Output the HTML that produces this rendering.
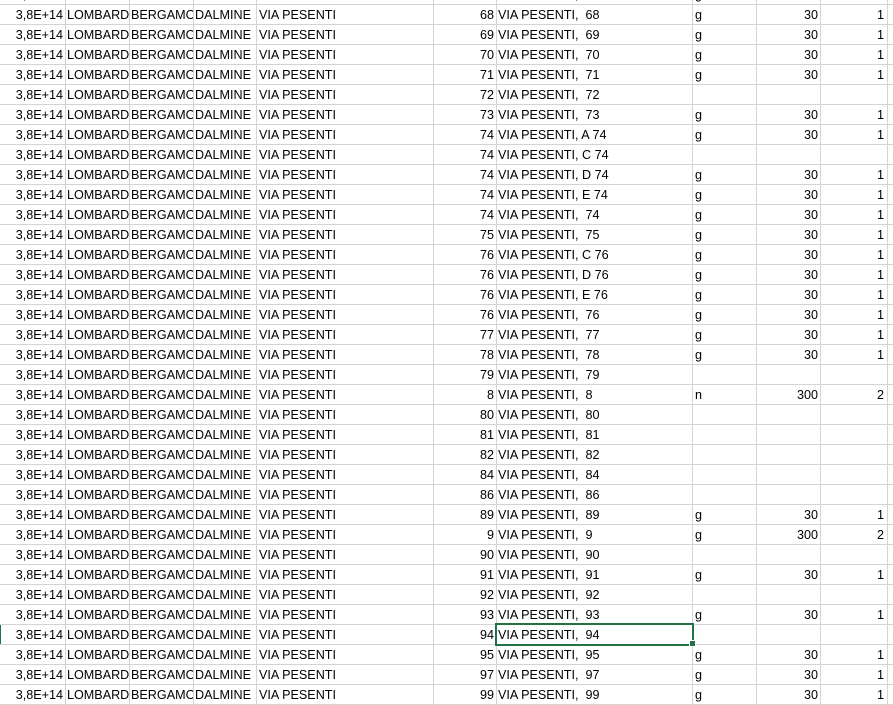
<!DOCTYPE html>
<html><head><meta charset="utf-8"><style>
html,body{margin:0;padding:0;background:#fff;}
#w{position:relative;width:893px;height:705px;overflow:hidden;font-family:"Liberation Sans",sans-serif;font-size:12.6px;color:#000;
background-image:repeating-linear-gradient(to bottom,transparent 0,transparent 4px,#d4d4d4 4px,#d4d4d4 5px,transparent 5px,transparent 20px);}
.v{position:absolute;top:0;width:1px;height:705px;background:#d4d4d4;}
.r{position:absolute;left:0;width:893px;height:20px;line-height:20px;margin-top:1px;}
.r span{position:absolute;top:0;white-space:pre;overflow:hidden;}
.a{left:0;width:63px;text-align:right}
.b{left:67px;width:62px}
.c{left:131px;width:62px}
.d{left:195px;width:61px}
.e{left:259px}
.f{left:433px;width:61px;text-align:right}
.g{left:498px}
.h{left:695px}
.i{left:756px;width:62px;text-align:right}
.j{left:821px;width:63px;text-align:right}
#sel{position:absolute;left:495px;top:623px;width:195px;height:19px;border:2px solid #217346;}
#hd{position:absolute;left:689px;top:640px;width:5px;height:5px;background:#217346;border:1px solid #fff;}
</style></head><body><div id="w">
<div class="v" style="left:65px"></div><div class="v" style="left:129px"></div><div class="v" style="left:193px"></div><div class="v" style="left:256px"></div><div class="v" style="left:433px"></div><div class="v" style="left:496px"></div><div class="v" style="left:692px"></div><div class="v" style="left:756px"></div><div class="v" style="left:820px"></div><div class="v" style="left:887px"></div>
<div class="r" style="top:-16px"><span class="a">3,8E+14</span><span class="b">LOMBARD</span><span class="c">BERGAMO</span><span class="d">DALMINE</span><span class="e">VIA PESENTI</span><span class="f">67</span><span class="g">VIA PESENTI,  67</span><span class="h">g</span><span class="i">30</span><span class="j">1</span></div>
<div class="r" style="top:4px"><span class="a">3,8E+14</span><span class="b">LOMBARD</span><span class="c">BERGAMO</span><span class="d">DALMINE</span><span class="e">VIA PESENTI</span><span class="f">68</span><span class="g">VIA PESENTI,  68</span><span class="h">g</span><span class="i">30</span><span class="j">1</span></div>
<div class="r" style="top:24px"><span class="a">3,8E+14</span><span class="b">LOMBARD</span><span class="c">BERGAMO</span><span class="d">DALMINE</span><span class="e">VIA PESENTI</span><span class="f">69</span><span class="g">VIA PESENTI,  69</span><span class="h">g</span><span class="i">30</span><span class="j">1</span></div>
<div class="r" style="top:44px"><span class="a">3,8E+14</span><span class="b">LOMBARD</span><span class="c">BERGAMO</span><span class="d">DALMINE</span><span class="e">VIA PESENTI</span><span class="f">70</span><span class="g">VIA PESENTI,  70</span><span class="h">g</span><span class="i">30</span><span class="j">1</span></div>
<div class="r" style="top:64px"><span class="a">3,8E+14</span><span class="b">LOMBARD</span><span class="c">BERGAMO</span><span class="d">DALMINE</span><span class="e">VIA PESENTI</span><span class="f">71</span><span class="g">VIA PESENTI,  71</span><span class="h">g</span><span class="i">30</span><span class="j">1</span></div>
<div class="r" style="top:84px"><span class="a">3,8E+14</span><span class="b">LOMBARD</span><span class="c">BERGAMO</span><span class="d">DALMINE</span><span class="e">VIA PESENTI</span><span class="f">72</span><span class="g">VIA PESENTI,  72</span></div>
<div class="r" style="top:104px"><span class="a">3,8E+14</span><span class="b">LOMBARD</span><span class="c">BERGAMO</span><span class="d">DALMINE</span><span class="e">VIA PESENTI</span><span class="f">73</span><span class="g">VIA PESENTI,  73</span><span class="h">g</span><span class="i">30</span><span class="j">1</span></div>
<div class="r" style="top:124px"><span class="a">3,8E+14</span><span class="b">LOMBARD</span><span class="c">BERGAMO</span><span class="d">DALMINE</span><span class="e">VIA PESENTI</span><span class="f">74</span><span class="g">VIA PESENTI, A 74</span><span class="h">g</span><span class="i">30</span><span class="j">1</span></div>
<div class="r" style="top:144px"><span class="a">3,8E+14</span><span class="b">LOMBARD</span><span class="c">BERGAMO</span><span class="d">DALMINE</span><span class="e">VIA PESENTI</span><span class="f">74</span><span class="g">VIA PESENTI, C 74</span></div>
<div class="r" style="top:164px"><span class="a">3,8E+14</span><span class="b">LOMBARD</span><span class="c">BERGAMO</span><span class="d">DALMINE</span><span class="e">VIA PESENTI</span><span class="f">74</span><span class="g">VIA PESENTI, D 74</span><span class="h">g</span><span class="i">30</span><span class="j">1</span></div>
<div class="r" style="top:184px"><span class="a">3,8E+14</span><span class="b">LOMBARD</span><span class="c">BERGAMO</span><span class="d">DALMINE</span><span class="e">VIA PESENTI</span><span class="f">74</span><span class="g">VIA PESENTI, E 74</span><span class="h">g</span><span class="i">30</span><span class="j">1</span></div>
<div class="r" style="top:204px"><span class="a">3,8E+14</span><span class="b">LOMBARD</span><span class="c">BERGAMO</span><span class="d">DALMINE</span><span class="e">VIA PESENTI</span><span class="f">74</span><span class="g">VIA PESENTI,  74</span><span class="h">g</span><span class="i">30</span><span class="j">1</span></div>
<div class="r" style="top:224px"><span class="a">3,8E+14</span><span class="b">LOMBARD</span><span class="c">BERGAMO</span><span class="d">DALMINE</span><span class="e">VIA PESENTI</span><span class="f">75</span><span class="g">VIA PESENTI,  75</span><span class="h">g</span><span class="i">30</span><span class="j">1</span></div>
<div class="r" style="top:244px"><span class="a">3,8E+14</span><span class="b">LOMBARD</span><span class="c">BERGAMO</span><span class="d">DALMINE</span><span class="e">VIA PESENTI</span><span class="f">76</span><span class="g">VIA PESENTI, C 76</span><span class="h">g</span><span class="i">30</span><span class="j">1</span></div>
<div class="r" style="top:264px"><span class="a">3,8E+14</span><span class="b">LOMBARD</span><span class="c">BERGAMO</span><span class="d">DALMINE</span><span class="e">VIA PESENTI</span><span class="f">76</span><span class="g">VIA PESENTI, D 76</span><span class="h">g</span><span class="i">30</span><span class="j">1</span></div>
<div class="r" style="top:284px"><span class="a">3,8E+14</span><span class="b">LOMBARD</span><span class="c">BERGAMO</span><span class="d">DALMINE</span><span class="e">VIA PESENTI</span><span class="f">76</span><span class="g">VIA PESENTI, E 76</span><span class="h">g</span><span class="i">30</span><span class="j">1</span></div>
<div class="r" style="top:304px"><span class="a">3,8E+14</span><span class="b">LOMBARD</span><span class="c">BERGAMO</span><span class="d">DALMINE</span><span class="e">VIA PESENTI</span><span class="f">76</span><span class="g">VIA PESENTI,  76</span><span class="h">g</span><span class="i">30</span><span class="j">1</span></div>
<div class="r" style="top:324px"><span class="a">3,8E+14</span><span class="b">LOMBARD</span><span class="c">BERGAMO</span><span class="d">DALMINE</span><span class="e">VIA PESENTI</span><span class="f">77</span><span class="g">VIA PESENTI,  77</span><span class="h">g</span><span class="i">30</span><span class="j">1</span></div>
<div class="r" style="top:344px"><span class="a">3,8E+14</span><span class="b">LOMBARD</span><span class="c">BERGAMO</span><span class="d">DALMINE</span><span class="e">VIA PESENTI</span><span class="f">78</span><span class="g">VIA PESENTI,  78</span><span class="h">g</span><span class="i">30</span><span class="j">1</span></div>
<div class="r" style="top:364px"><span class="a">3,8E+14</span><span class="b">LOMBARD</span><span class="c">BERGAMO</span><span class="d">DALMINE</span><span class="e">VIA PESENTI</span><span class="f">79</span><span class="g">VIA PESENTI,  79</span></div>
<div class="r" style="top:384px"><span class="a">3,8E+14</span><span class="b">LOMBARD</span><span class="c">BERGAMO</span><span class="d">DALMINE</span><span class="e">VIA PESENTI</span><span class="f">8</span><span class="g">VIA PESENTI,  8</span><span class="h">n</span><span class="i">300</span><span class="j">2</span></div>
<div class="r" style="top:404px"><span class="a">3,8E+14</span><span class="b">LOMBARD</span><span class="c">BERGAMO</span><span class="d">DALMINE</span><span class="e">VIA PESENTI</span><span class="f">80</span><span class="g">VIA PESENTI,  80</span></div>
<div class="r" style="top:424px"><span class="a">3,8E+14</span><span class="b">LOMBARD</span><span class="c">BERGAMO</span><span class="d">DALMINE</span><span class="e">VIA PESENTI</span><span class="f">81</span><span class="g">VIA PESENTI,  81</span></div>
<div class="r" style="top:444px"><span class="a">3,8E+14</span><span class="b">LOMBARD</span><span class="c">BERGAMO</span><span class="d">DALMINE</span><span class="e">VIA PESENTI</span><span class="f">82</span><span class="g">VIA PESENTI,  82</span></div>
<div class="r" style="top:464px"><span class="a">3,8E+14</span><span class="b">LOMBARD</span><span class="c">BERGAMO</span><span class="d">DALMINE</span><span class="e">VIA PESENTI</span><span class="f">84</span><span class="g">VIA PESENTI,  84</span></div>
<div class="r" style="top:484px"><span class="a">3,8E+14</span><span class="b">LOMBARD</span><span class="c">BERGAMO</span><span class="d">DALMINE</span><span class="e">VIA PESENTI</span><span class="f">86</span><span class="g">VIA PESENTI,  86</span></div>
<div class="r" style="top:504px"><span class="a">3,8E+14</span><span class="b">LOMBARD</span><span class="c">BERGAMO</span><span class="d">DALMINE</span><span class="e">VIA PESENTI</span><span class="f">89</span><span class="g">VIA PESENTI,  89</span><span class="h">g</span><span class="i">30</span><span class="j">1</span></div>
<div class="r" style="top:524px"><span class="a">3,8E+14</span><span class="b">LOMBARD</span><span class="c">BERGAMO</span><span class="d">DALMINE</span><span class="e">VIA PESENTI</span><span class="f">9</span><span class="g">VIA PESENTI,  9</span><span class="h">g</span><span class="i">300</span><span class="j">2</span></div>
<div class="r" style="top:544px"><span class="a">3,8E+14</span><span class="b">LOMBARD</span><span class="c">BERGAMO</span><span class="d">DALMINE</span><span class="e">VIA PESENTI</span><span class="f">90</span><span class="g">VIA PESENTI,  90</span></div>
<div class="r" style="top:564px"><span class="a">3,8E+14</span><span class="b">LOMBARD</span><span class="c">BERGAMO</span><span class="d">DALMINE</span><span class="e">VIA PESENTI</span><span class="f">91</span><span class="g">VIA PESENTI,  91</span><span class="h">g</span><span class="i">30</span><span class="j">1</span></div>
<div class="r" style="top:584px"><span class="a">3,8E+14</span><span class="b">LOMBARD</span><span class="c">BERGAMO</span><span class="d">DALMINE</span><span class="e">VIA PESENTI</span><span class="f">92</span><span class="g">VIA PESENTI,  92</span></div>
<div class="r" style="top:604px"><span class="a">3,8E+14</span><span class="b">LOMBARD</span><span class="c">BERGAMO</span><span class="d">DALMINE</span><span class="e">VIA PESENTI</span><span class="f">93</span><span class="g">VIA PESENTI,  93</span><span class="h">g</span><span class="i">30</span><span class="j">1</span></div>
<div class="r" style="top:624px"><span class="a">3,8E+14</span><span class="b">LOMBARD</span><span class="c">BERGAMO</span><span class="d">DALMINE</span><span class="e">VIA PESENTI</span><span class="f">94</span><span class="g">VIA PESENTI,  94</span></div>
<div class="r" style="top:644px"><span class="a">3,8E+14</span><span class="b">LOMBARD</span><span class="c">BERGAMO</span><span class="d">DALMINE</span><span class="e">VIA PESENTI</span><span class="f">95</span><span class="g">VIA PESENTI,  95</span><span class="h">g</span><span class="i">30</span><span class="j">1</span></div>
<div class="r" style="top:664px"><span class="a">3,8E+14</span><span class="b">LOMBARD</span><span class="c">BERGAMO</span><span class="d">DALMINE</span><span class="e">VIA PESENTI</span><span class="f">97</span><span class="g">VIA PESENTI,  97</span><span class="h">g</span><span class="i">30</span><span class="j">1</span></div>
<div class="r" style="top:684px"><span class="a">3,8E+14</span><span class="b">LOMBARD</span><span class="c">BERGAMO</span><span class="d">DALMINE</span><span class="e">VIA PESENTI</span><span class="f">99</span><span class="g">VIA PESENTI,  99</span><span class="h">g</span><span class="i">30</span><span class="j">1</span></div>
<div style="position:absolute;left:0;top:625px;width:1px;height:19px;background:#217346"></div>
<div id="sel"></div><div id="hd"></div>
</div></body></html>
